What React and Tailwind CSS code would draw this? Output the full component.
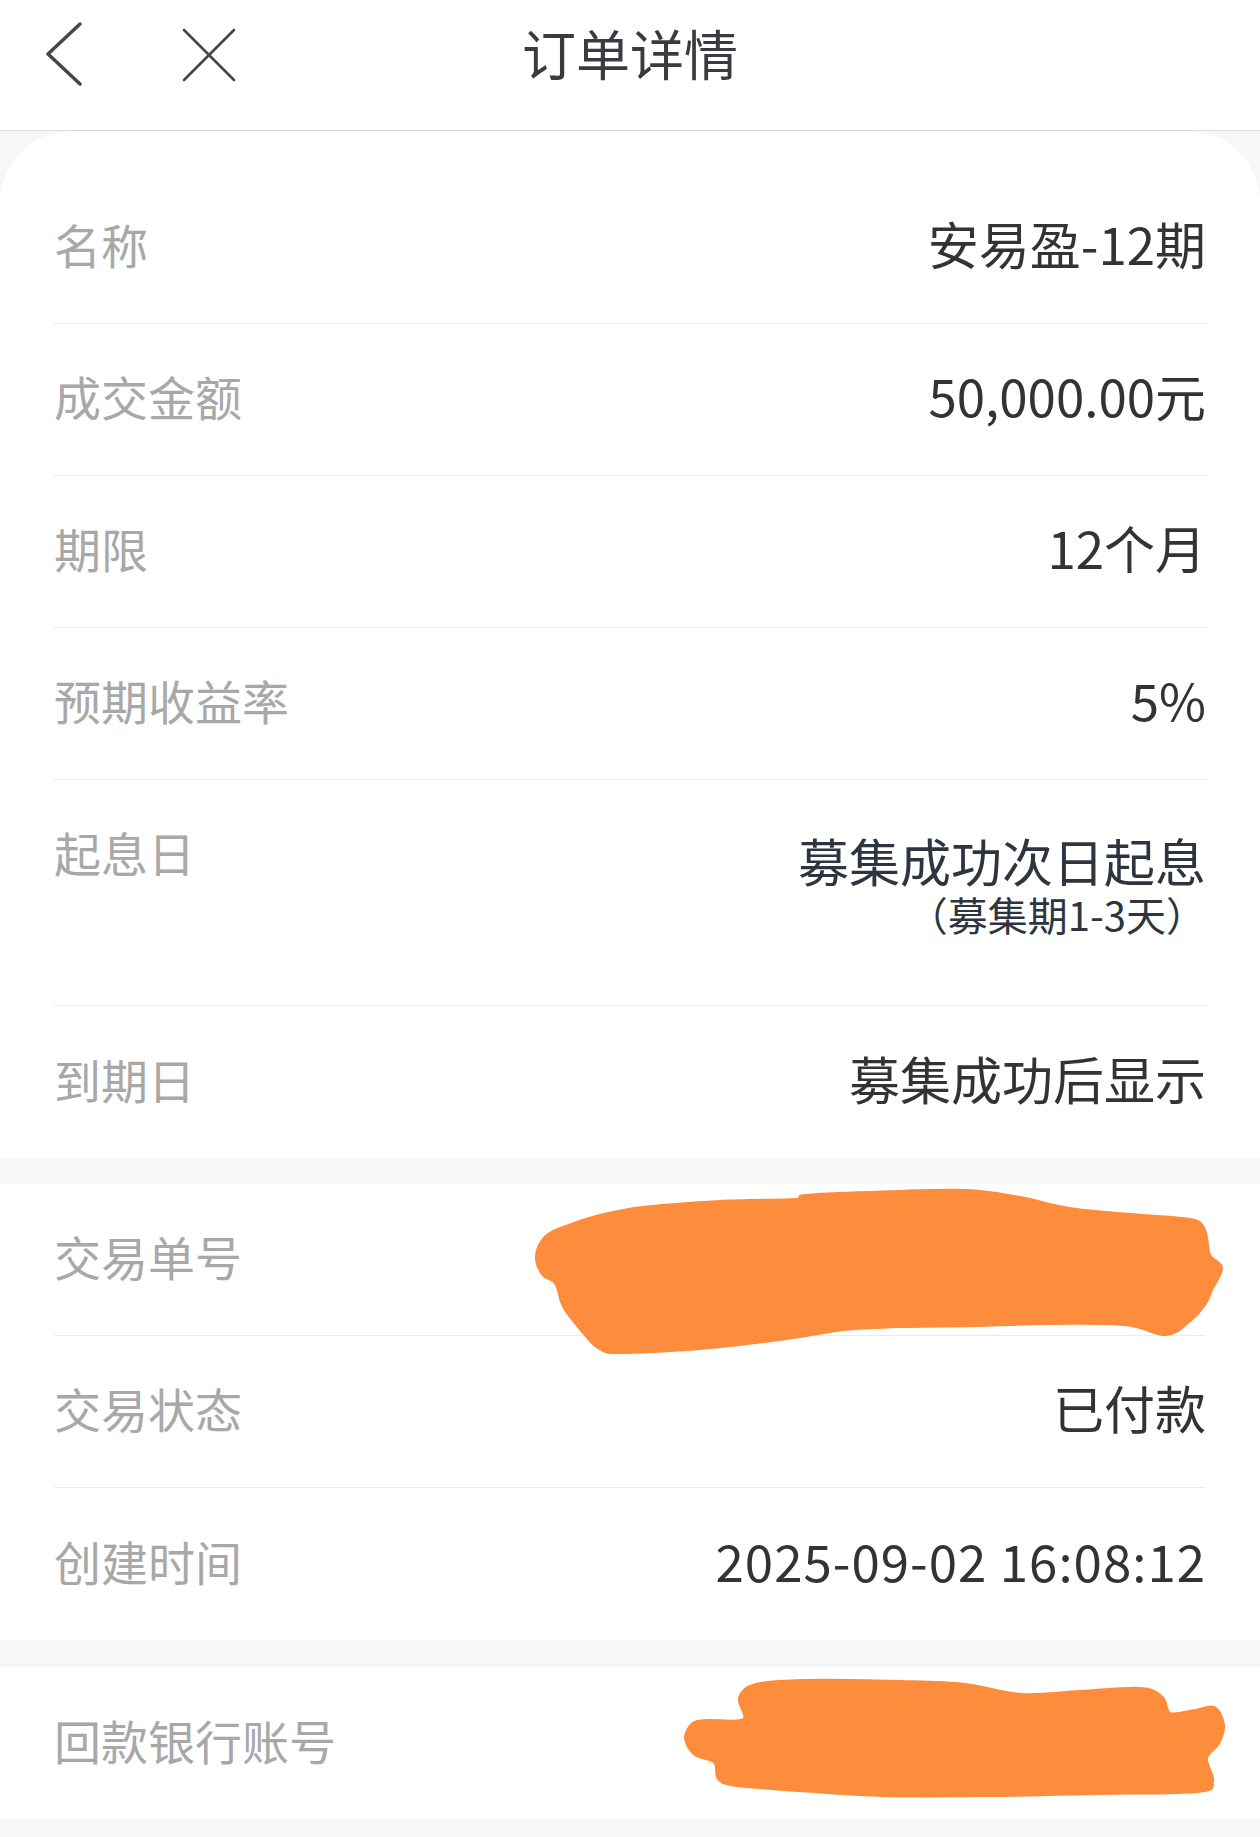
import React from "react";

function smoothPath(pts) {
  const n = pts.length;
  let d = `M${pts[0][0]},${pts[0][1]}`;
  for (let i = 0; i < n; i++) {
    const p0 = pts[(i - 1 + n) % n];
    const p1 = pts[i];
    const p2 = pts[(i + 1) % n];
    const p3 = pts[(i + 2) % n];
    const c1x = p1[0] + (p2[0] - p0[0]) / 6;
    const c1y = p1[1] + (p2[1] - p0[1]) / 6;
    const c2x = p2[0] - (p3[0] - p1[0]) / 6;
    const c2y = p2[1] - (p3[1] - p1[1]) / 6;
    d += ` C${c1x.toFixed(1)},${c1y.toFixed(1)} ${c2x.toFixed(1)},${c2y.toFixed(1)} ${p2[0]},${p2[1]}`;
  }
  return d + " Z";
}

const blob1 = [
  [563, 1230], [600, 1218], [643, 1210], [720, 1204], [796, 1202], [805, 1198], [870, 1195],
  [965, 1193], [1020, 1200], [1069, 1211], [1130, 1217], [1190, 1222], [1204, 1232],
  [1209, 1257], [1221, 1270], [1211, 1292], [1205, 1305], [1190, 1322], [1166, 1336],
  [1125, 1326], [1045, 1325], [980, 1327], [900, 1328], [844, 1331], [800, 1338], [764, 1343],
  [700, 1350], [619, 1354], [600, 1350], [587, 1338], [565, 1310], [556, 1285], [543, 1276],
  [537, 1258], [545, 1240],
];

const blob2 = [
  [756, 1687], [804, 1683], [900, 1684], [965, 1687], [1021, 1697], [1080, 1694], [1141, 1691],
  [1162, 1700], [1170, 1716], [1195, 1713], [1214, 1710], [1223, 1727], [1218, 1745],
  [1206, 1760], [1212, 1783], [1198, 1793], [1100, 1795], [990, 1797], [884, 1797], [800, 1792],
  [772, 1790], [723, 1784], [715, 1764], [695, 1756], [686, 1740], [693, 1726], [707, 1723],
  [744, 1722], [740, 1700],
];

function Scribble({ pts, top }) {
  return (
    <svg
      className="absolute left-0 top-0 z-10 overflow-visible pointer-events-none"
      width="1260"
      height="152"
      viewBox={`0 ${top} 1260 152`}
    >
      <path
        d={smoothPath(pts)}
        fill="#FD8C3C"
        stroke="#FD8C3C"
        strokeWidth="4"
        strokeLinejoin="round"
      />
    </svg>
  );
}

function Row({ label, value, last, valueClass = "" }) {
  return (
    <div
      className={`mx-[54px] h-[152px] flex items-center justify-between pb-[8px] ${
        last ? "" : "border-b border-[#ececec]"
      }`}
    >
      <span className="text-[47px] leading-none text-[#a8a8a8]">{label}</span>
      <span className={`text-[51px] leading-none text-[#333333] ${valueClass}`}>{value}</span>
    </div>
  );
}

export default function App() {
  return (
    <div className="w-[1260px] min-h-[1837px] bg-[#f7f7f7] font-['Noto_Sans_CJK_SC','Noto_Sans',sans-serif]">
      {/* Header */}
      <div className="h-[131px] bg-white border-b border-[#dcdcdc] grid grid-cols-[1fr_auto_1fr] items-start">
        <div className="flex items-start pt-[22px] pl-[46px] gap-[100px]">
          <svg width="36" height="64" viewBox="0 0 36 64">
            <polyline
              points="34,2 2,32 34,62"
              fill="none"
              stroke="#45454d"
              strokeWidth="3.5"
              strokeLinecap="round"
              strokeLinejoin="round"
            />
          </svg>
          <svg width="54" height="54" viewBox="0 0 54 54" className="mt-[6px]">
            <line x1="2" y1="2" x2="52" y2="52" stroke="#45454d" strokeWidth="2.6" strokeLinecap="round" />
            <line x1="52" y1="2" x2="2" y2="52" stroke="#45454d" strokeWidth="2.6" strokeLinecap="round" />
          </svg>
        </div>
        <div className="pt-[26px] text-[54px] leading-none text-[#3a3a42]">订单详情</div>
        <div />
      </div>

      {/* Card 1 */}
      <div className="bg-white rounded-t-[72px] pt-[41px]">
        <Row label="名称" value="安易盈-12期" />
        <Row label="成交金额" value="50,000.00元" />
        <Row label="期限" value="12个月" />
        <Row label="预期收益率" value="5%" />
        <div className="mx-[54px] h-[226px] flex items-start justify-between border-b border-[#ececec]">
          <span className="mt-[48px] text-[47px] leading-none text-[#a8a8a8]">起息日</span>
          <div className="mt-[55px] flex flex-col items-end">
            <span className="text-[51px] leading-none text-[#2f3540]">募集成功次日起息</span>
            <span className="mt-[8px] text-[40px] leading-none text-[#2f3540]">（募集期1-3天）</span>
          </div>
        </div>
        <Row label="到期日" value="募集成功后显示" last />
      </div>

      {/* Card 2 */}
      <div className="mt-[26px] bg-white">
        <div className="relative">
          <Row label="交易单号" value="" />
          <Scribble pts={blob1} top={1186} />
        </div>
        <Row label="交易状态" value="已付款" />
        <Row label="创建时间" value="2025-09-02 16:08:12" valueClass="tracking-[1px]" last />
      </div>

      {/* Card 3 */}
      <div className="mt-[27px] bg-white">
        <div className="relative">
          <Row label="回款银行账号" value="" last />
          <Scribble pts={blob2} top={1669} />
        </div>
      </div>
    </div>
  );
}
